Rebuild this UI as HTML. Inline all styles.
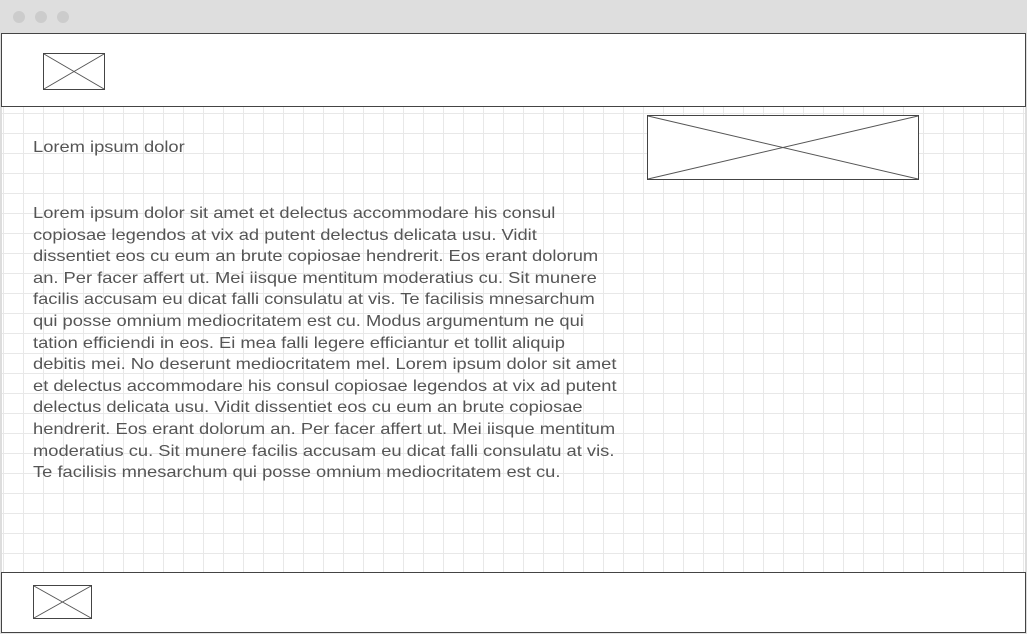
<!DOCTYPE html>
<html><head><meta charset="utf-8"><style>
html,body{margin:0;padding:0;width:1027px;height:634px;overflow:hidden;background:#fff;font-family:"Liberation Sans",sans-serif;}
.top{position:absolute;left:0;top:0;width:1027px;height:33px;background:#dedede;}
.dot{position:absolute;top:11px;width:12px;height:12px;border-radius:50%;background:#ccc;}
.page{position:absolute;left:0;top:33px;width:1027px;height:601px;
background-color:#fff;
background-image:linear-gradient(to right,#e8e8e8 1px,transparent 1px),linear-gradient(to bottom,#e8e8e8 1px,transparent 1px);
background-size:20px 20px;background-position:1px 0px;
border-left:2px solid #ddd;border-right:2px solid #ddd;box-sizing:border-box;}
.box{position:absolute;background:#fff;border:1px solid #444;box-sizing:border-box;}
svg{position:absolute;}
.t{position:absolute;color:#555;font-size:16px;transform:scaleX(1.145);transform-origin:0 0;}
</style></head><body>
<div class="top"><div class="dot" style="left:13px"></div><div class="dot" style="left:35px"></div><div class="dot" style="left:57px"></div></div>
<div class="page"></div>
<div class="box" style="left:1px;top:33px;width:1025px;height:74px"></div>
<div class="box" style="left:1px;top:572px;width:1025px;height:61px"></div>
<svg style="left:43px;top:53px" width="62" height="37"><rect x="0.5" y="0.5" width="61" height="36" fill="#fff" stroke="#444"/><path d="M1 1L61 36M61 1L1 36" stroke="#555"/></svg>
<svg style="left:33px;top:585px" width="59" height="34"><rect x="0.5" y="0.5" width="58" height="33" fill="#fff" stroke="#444"/><path d="M1 1L58 33M58 1L1 33" stroke="#555"/></svg>
<svg style="left:647px;top:115px" width="272" height="65"><rect x="0.5" y="0.5" width="271" height="64" fill="#fff" stroke="#444"/><path d="M1 1L271 64M271 1L1 64" stroke="#555"/></svg>
<div class="t" style="left:33px;top:139px">Lorem ipsum dolor</div>
<div class="t" style="left:33px;top:203px;line-height:21.6px;white-space:nowrap">Lorem ipsum dolor sit amet et delectus accommodare his consul<br>copiosae legendos at vix ad putent delectus delicata usu. Vidit<br>dissentiet eos cu eum an brute copiosae hendrerit. Eos erant dolorum<br>an. Per facer affert ut. Mei iisque mentitum moderatius cu. Sit munere<br>facilis accusam eu dicat falli consulatu at vis. Te facilisis mnesarchum<br>qui posse omnium mediocritatem est cu. Modus argumentum ne qui<br>tation efficiendi in eos. Ei mea falli legere efficiantur et tollit aliquip<br>debitis mei. No deserunt mediocritatem mel. Lorem ipsum dolor sit amet<br>et delectus accommodare his consul copiosae legendos at vix ad putent<br>delectus delicata usu. Vidit dissentiet eos cu eum an brute copiosae<br>hendrerit. Eos erant dolorum an. Per facer affert ut. Mei iisque mentitum<br>moderatius cu. Sit munere facilis accusam eu dicat falli consulatu at vis.<br>Te facilisis mnesarchum qui posse omnium mediocritatem est cu.</div>
</body></html>
